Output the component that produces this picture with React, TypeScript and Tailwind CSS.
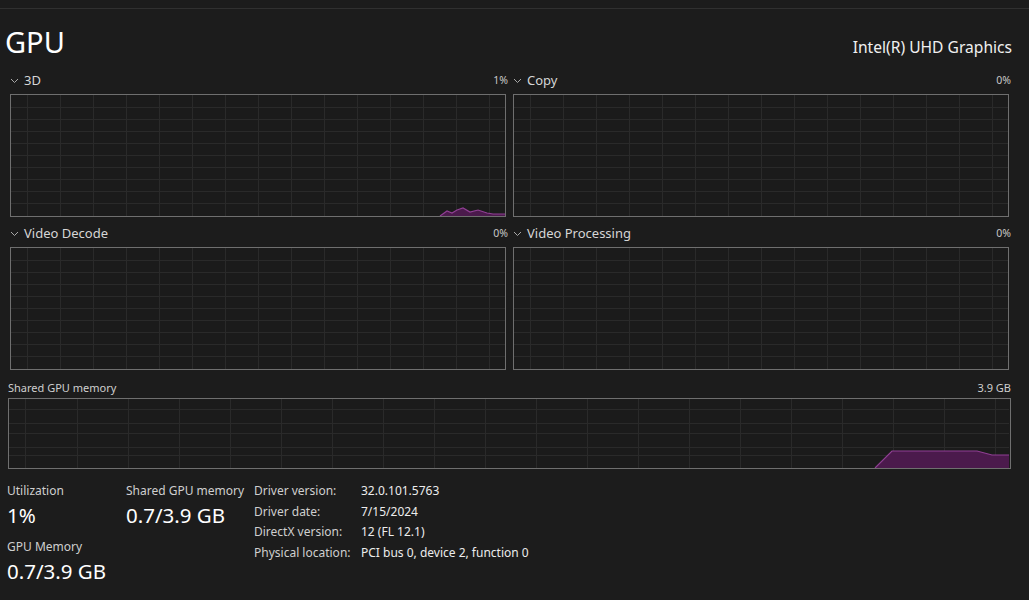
import React from "react";

type Pt = [number, number];

function Chevron() {
  return (
    <svg width="9" height="6" viewBox="0 0 9 6" className="mr-[5px] mt-[1px]">
      <polyline points="1,1 4.5,4.5 8,1" fill="none" stroke="#a8a8a8" strokeWidth="1" />
    </svg>
  );
}

function Graph({
  w,
  h,
  vx,
  hy,
  pts,
}: {
  w: number;
  h: number;
  vx: number[];
  hy: number[];
  pts?: Pt[];
}) {
  const area = pts ? `M${pts[0][0]},${h} ` + pts.map((p) => `L${p[0]},${p[1]}`).join(" ") + ` L${pts[pts.length - 1][0]},${h} Z` : "";
  const line = pts ? pts.map((p, i) => `${i ? "L" : "M"}${p[0]},${p[1]}`).join(" ") : "";
  return (
    <svg width={w} height={h} className="block">
      {hy.map((y) => (
        <line key={"h" + y} x1="0" x2={w} y1={y + 0.5} y2={y + 0.5} stroke="#2a2a2a" strokeWidth="1" />
      ))}
      {vx.map((x) => (
        <line key={"v" + x} x1={x + 0.5} x2={x + 0.5} y1="0" y2={h} stroke="#2a2a2a" strokeWidth="1" />
      ))}
      {pts && <path d={area} fill="#4b1a4c" />}
      {pts && <path d={line} fill="none" stroke="#8f3f93" strokeWidth="1.2" />}
    </svg>
  );
}

const smallV = [16, 49, 82, 115, 148, 181, 214, 247, 280, 313, 346, 379, 412, 445, 478];
const smallH = [12, 24, 36, 48, 60, 72, 84, 96, 108];

function Panel({ name, pct, pts }: { name: string; pct: string; pts?: Pt[] }) {
  return (
    <div className="w-[498px] flex flex-col">
      <div className="h-[23px] flex items-start justify-between leading-[18px]">
        <div className="flex items-center text-[13px] text-[#d6d6d6]">
          <Chevron />
          <span>{name}</span>
        </div>
        <span className="text-[10.5px] text-[#c8c8c8]">{pct}</span>
      </div>
      <div className="w-[496px] h-[123px] border border-[#6f6f6f] bg-[#1b1b1b]">
        <Graph w={494} h={121} vx={smallV} hy={smallH} pts={pts} />
      </div>
    </div>
  );
}

const info: [string, string][] = [
  ["Driver version:", "32.0.101.5763"],
  ["Driver date:", "7/15/2024"],
  ["DirectX version:", "12 (FL 12.1)"],
  ["Physical location:", "PCI bus 0, device 2, function 0"],
];

export default function App() {
  const memV = [16, 68, 119, 170, 221, 272, 323, 374, 425, 476, 527, 578, 629, 680, 731, 782, 833, 884, 935, 986];
  return (
    <div
      className="w-[1029px] h-[600px] overflow-hidden bg-[#1c1c1c] text-white"
      style={{ fontFamily: '"Noto Sans", "Open Sans", sans-serif' }}
    >
      <div className="h-[8px]" />
      <div className="h-px bg-[#303030]" />

      <div className="mt-[15px] h-[36px] pl-[5px] pr-[17px] flex items-baseline justify-between">
        <span className="text-[29px] leading-[36px] text-white">GPU</span>
        <span className="text-[15.6px] text-[#f0f0f0]">Intel(R) UHD Graphics</span>
      </div>

      <div className="mt-[11px] pl-[10px] flex flex-col gap-[7px]">
        <div className="flex gap-[5px]">
          <Panel
            name="3D"
            pct="1%"
            pts={[
              [429, 121],
              [436, 116],
              [441, 118],
              [446, 115],
              [452, 113],
              [459, 117],
              [467, 115],
              [476, 118],
              [482, 119],
              [494, 119],
            ]}
          />
          <Panel name="Copy" pct="0%" />
        </div>
        <div className="flex gap-[5px]">
          <Panel name="Video Decode" pct="0%" />
          <Panel name="Video Processing" pct="0%" />
        </div>
      </div>

      <div className="mt-[10px] pl-[8px] w-[1011px]">
        <div className="h-[18px] flex items-start justify-between text-[11px] leading-[16px] text-[#cfcfcf]">
          <span>Shared GPU memory</span>
          <span>3.9 GB</span>
        </div>
        <div className="h-[71px] border border-[#6f6f6f] bg-[#1b1b1b]">
          <Graph
            w={1000}
            h={69}
            vx={memV}
            hy={[10, 24, 34, 48, 56]}
            pts={[
              [866, 69],
              [883, 52],
              [968, 52],
              [983, 56],
              [1000, 56],
            ]}
          />
        </div>
      </div>

      <div className="mt-[13px] flex">
        <div className="w-[126px] pl-[7px] flex flex-col">
          <span className="text-[12px] leading-[18px] text-[#cfcfcf]">Utilization</span>
          <span className="text-[20.5px] leading-[30px] text-white">1%</span>
          <span className="mt-[8px] text-[12px] leading-[18px] text-[#cfcfcf]">GPU Memory</span>
          <span className="text-[20.5px] leading-[30px] text-white">0.7/3.9 GB</span>
        </div>
        <div className="w-[128px] flex flex-col">
          <span className="text-[12px] leading-[18px] text-[#cfcfcf]">Shared GPU memory</span>
          <span className="text-[20.5px] leading-[30px] text-white">0.7/3.9 GB</span>
        </div>
        <div className="flex flex-col">
          {info.map(([k, v]) => (
            <div key={k} className="flex h-[20.6px] items-start text-[12px] leading-[18px]">
              <span className="w-[107px] text-[#cfcfcf]">{k}</span>
              <span className="text-[#ececec]">{v}</span>
            </div>
          ))}
        </div>
      </div>
    </div>
  );
}
